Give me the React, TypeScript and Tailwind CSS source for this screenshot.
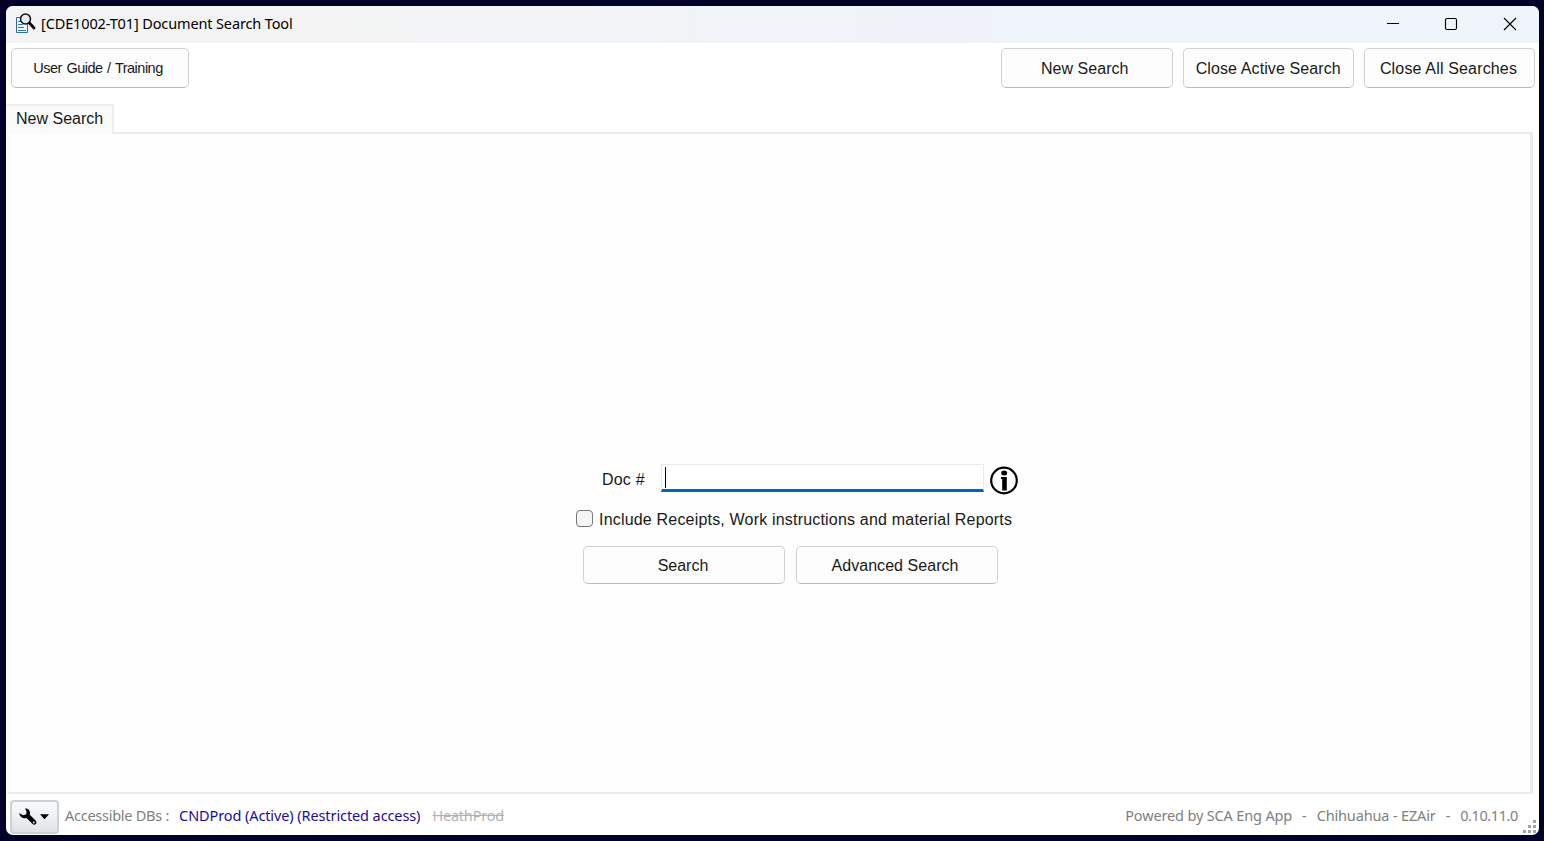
import type { ReactNode } from "react";

function Button({ children, className = "" }: { children: ReactNode; className?: string }) {
  return (
    <button
      className={`flex shrink-0 items-center justify-center whitespace-nowrap rounded-[5px] border border-[#d2d2d2] border-b-[#bababa] bg-[#fdfdfd] pt-0.5 ${className}`}
    >
      {children}
    </button>
  );
}

function AppIcon() {
  return (
    <svg width="22" height="24" viewBox="0 0 22 24" fill="none">
      <path d="M2.5 5.5h11v15h-11z" fill="#f7fbff" stroke="#2f6aa8" />
      <path d="M4 9.5h3M4 12.5h5M4 15.5h6M4 18.5h8" stroke="#2b79c2" />
      <circle cx="11.5" cy="7" r="5" fill="#e9edf1" stroke="#111" strokeWidth="1.5" />
      <path d="M15.5 11l4.5 5" stroke="#050505" strokeWidth="2.7" strokeLinecap="round" />
    </svg>
  );
}

function InfoIcon() {
  return (
    <svg width="28" height="30" viewBox="0 0 28 30">
      <circle cx="14" cy="15.5" r="12.8" fill="#fff" stroke="#000" strokeWidth="2.2" />
      <ellipse cx="14.2" cy="8" rx="3" ry="2.5" />
      <path d="M11 12h5.8v13.5h-4.6V14H11z" />
    </svg>
  );
}

function WrenchIcon() {
  return (
    <svg width="18" height="18" viewBox="0 0 18 18">
      <path d="M6 .5C9.6.2 11.7 3.3 10.8 6.8l6 5.9c2 2.1-.9 5.5-3.2 3.4L7.5 10C4 11 .3 8.6.4 5.1l3.3 2.1 3.4-.7.5-2.8z" />
      <circle cx="14.8" cy="14.5" r=".9" fill="#f0f1f3" />
    </svg>
  );
}

export default function App() {
  return (
    <div className="h-[841px] w-[1544px] overflow-hidden bg-[#000029] pl-1.5 pt-1.5 font-['Liberation_Sans',Arial,sans-serif] text-base text-[#191919]">
      <main className="flex h-[829px] w-[1533px] flex-col overflow-hidden rounded-[7px] bg-white">
        <header className="flex h-[37px] shrink-0 items-center bg-linear-to-r from-[#f3f3f3] from-20% to-[#eff3fa] to-65% pl-2 font-['Noto_Sans',sans-serif] text-black">
          <div className="-mt-0.5 mr-[5px]"><AppIcon /></div>
          <h1 className="-mt-0.5 whitespace-nowrap text-[14.5px] tracking-[-0.13px]">[CDE1002-T01] Document Search Tool</h1>
          <svg className="-mt-px ml-auto mr-[21px]" width="132" height="14" viewBox="0 0 132 14" fill="none" stroke="#000" strokeWidth="1.15">
            <path d="M1 6.5h12M118 1l12 12m0-12l-12 12" />
            <rect x="59.5" y="1.5" width="11" height="11" rx="1.5" />
          </svg>
        </header>

        <div className="flex h-[61px] shrink-0 items-start gap-2.5 pl-[5px] pr-1 pt-[5px]">
          <Button className="mr-auto h-10 w-[178px] pr-1 text-[14.5px] tracking-[-0.5px] [word-spacing:1px]">User Guide / Training</Button>
          <Button className="h-10 w-[171.5px] pr-1 tracking-[0.05px]">New Search</Button>
          <Button className="h-10 w-[171.5px] tracking-[0.1px]">Close Active Search</Button>
          <Button className="h-10 w-[171px] pr-0.5 tracking-[0.16px]">Close All Searches</Button>
        </div>

        <div className="flex h-[30px] shrink-0">
          <div className="w-[108px] border-r-2 border-t-2 border-[#ededed] bg-[#fafafa] pl-2.5 pt-px">New Search</div>
          <div className="mr-1.5 flex-1 border-b-2 border-[#ebebeb]" />
        </div>

        <section className="mr-1.5 flex h-[660px] shrink-0 flex-col border-b-2 border-l-4 border-r-[3px] border-[#ebebeb] border-l-[#fafafa] bg-[#fefefe] pl-[566px] pt-[329px]">
          <div className="flex h-[32px] items-start">
            <label className="w-[85px] pl-[26px] pt-[5px] tracking-[0.2px]">Doc #</label>
            <div className="mt-px flex h-7 w-[323px] items-center border border-b-[3px] border-[#e7eaee] border-b-[#0067c0] bg-white pl-[3px]">
              <span className="h-[21px] w-px bg-black" />
            </div>
            <div className="ml-1.5 mt-0.5"><InfoIcon /></div>
          </div>
          <label className="mt-[12px] flex h-6 items-center whitespace-nowrap">
            <span className="-mt-px mr-[6px] size-[17px] rounded-[4px] border border-[#777] bg-[#f5f5f5]" />
            <span className="pt-0.5 tracking-[0.19px]">Include Receipts, Work instructions and material Reports</span>
          </label>
          <div className="mt-[15px] flex gap-[11px] pl-[7px]">
            <Button className="h-[38px] w-[202px] pr-0.5">Search</Button>
            <Button className="h-[38px] w-[202px] pr-1 tracking-[0.05px]">Advanced Search</Button>
          </div>
        </section>

        <footer className="flex flex-1 items-center whitespace-nowrap pl-1 font-['Noto_Sans',sans-serif] text-[14.5px] text-[#808080]">
          <button className="mt-1 flex h-[34px] w-[49px] items-center gap-[3px] rounded-[4px] border-2 border-[#cbd1d7] bg-linear-to-b from-[#fafafa] to-[#e1e3e8] pl-[7px]">
            <WrenchIcon />
            <svg width="9" height="6" viewBox="0 0 10 6"><path d="M0 0h10L5 5.5z" /></svg>
          </button>
          <span className="ml-1.5 pt-0.5 tracking-[-0.26px]">Accessible DBs :</span>
          <span className="ml-2.5 pt-0.5 tracking-[-0.1px] text-[#1b0b9e]">CNDProd (Active) (Restricted access)</span>
          <span className="ml-3 pt-0.5 tracking-[-0.2px] text-[#b2b2b2] line-through">HeathProd</span>
          <div className="ml-auto flex pt-0.5 tracking-[-0.15px]">
            <span>Powered by SCA Eng App</span>
            <span className="ml-2.5">-</span>
            <span className="ml-2.5">Chihuahua - EZAir</span>
            <span className="ml-2.5">-</span>
            <span className="ml-2.5 tracking-[-0.4px]">0.10.11.0</span>
          </div>
          <svg className="ml-1 mr-[1px] mt-6" width="16" height="14" viewBox="0 0 16 14" fill="#a5a5a5">
            <path d="M11 0h3v3h-3zM6 5h3v3H6zM11 5h3v3h-3zM1 10h3v3H1zM6 10h3v3H6zM11 10h3v3h-3z" />
          </svg>
        </footer>
      </main>
    </div>
  );
}
